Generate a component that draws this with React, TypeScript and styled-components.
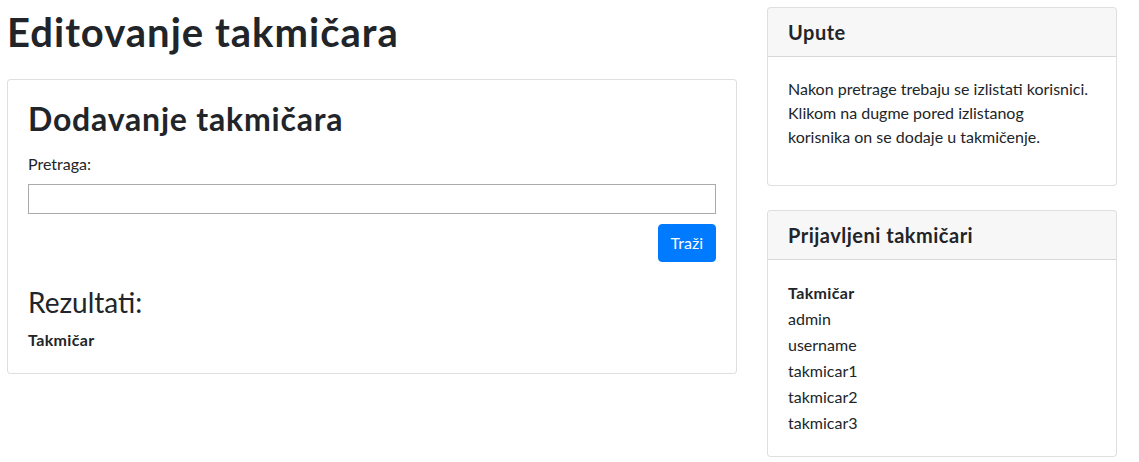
import React from 'react';
import styled, { createGlobalStyle } from 'styled-components';

const GlobalStyle = createGlobalStyle`
  body {
    margin: 0;
    background: #fff;
    color: #212529;
    font-family: Lato, 'Liberation Sans', sans-serif;
    font-size: 16px;
    line-height: 24px;
  }
`;

const contestants = ['admin', 'username', 'takmicar1', 'takmicar2', 'takmicar3'];

export default function App() {
  return (
    <>
      <GlobalStyle />
      <Page>
        <Main>
          <Title>Editovanje takmičara</Title>
          <Card>
            <CardBody>
              <SubTitle>Dodavanje takmičara</SubTitle>
              <Label htmlFor="search">Pretraga:</Label>
              <SearchInput id="search" type="text" />
              <Actions>
                <Button type="button">Traži</Button>
              </Actions>
              <Results>Rezultati:</Results>
              <Table>
                <thead>
                  <tr>
                    <Th>Takmičar</Th>
                  </tr>
                </thead>
              </Table>
            </CardBody>
          </Card>
        </Main>
        <Side>
          <Card>
            <CardHeader>
              <CardTitle>Upute</CardTitle>
            </CardHeader>
            <CardBody>
              <Text>
                Nakon pretrage trebaju se izlistati korisnici.
                <br />
                Klikom na dugme pored izlistanog
                <br />
                korisnika on se dodaje u takmičenje.
              </Text>
            </CardBody>
          </Card>
          <Card>
            <CardHeader>
              <CardTitle>Prijavljeni takmičari</CardTitle>
            </CardHeader>
            <CardBody>
              <Table>
                <thead>
                  <tr>
                    <Th>Takmičar</Th>
                  </tr>
                </thead>
                <tbody>
                  {contestants.map((name) => (
                    <tr key={name}>
                      <Td>{name}</Td>
                    </tr>
                  ))}
                </tbody>
              </Table>
            </CardBody>
          </Card>
        </Side>
      </Page>
    </>
  );
}

const Page = styled.div`
  display: grid;
  grid-template-columns: 730px 350px;
  column-gap: 30px;
  align-items: start;
  padding: 7px 0 0 7px;
`;

const Main = styled.div`
  display: flex;
  flex-direction: column;
`;

const Side = styled.div`
  display: flex;
  flex-direction: column;
  gap: 24px;
`;

const Title = styled.h1`
  margin: 1px 0 23px;
  font-size: 40px;
  line-height: 48px;
  font-weight: 700;
  letter-spacing: 1px;
`;

const Card = styled.div`
  display: flex;
  flex-direction: column;
  background: #fff;
  border: 1px solid rgba(0, 0, 0, 0.125);
  border-radius: 4px;
  overflow: hidden;
`;

const CardHeader = styled.div`
  padding: 12px 20px;
  background: rgba(0, 0, 0, 0.03);
  border-bottom: 1px solid rgba(0, 0, 0, 0.125);
`;

const CardTitle = styled.h5`
  margin: 0;
  font-size: 20px;
  line-height: 24px;
  font-weight: 700;
  letter-spacing: 0.5px;
`;

const CardBody = styled.div`
  display: flex;
  flex-direction: column;
  padding: 20px;
`;

const SubTitle = styled.h2`
  margin: 0 0 14px;
  font-size: 32px;
  line-height: 38px;
  font-weight: 700;
  letter-spacing: 0.8px;
`;

const Label = styled.label`
  display: block;
  margin-bottom: 8px;
`;

const SearchInput = styled.input`
  box-sizing: border-box;
  width: 100%;
  height: 30px;
  margin: 0;
  padding: 2px 6px;
  border: 1px solid #a9a9a9;
  border-radius: 0;
  font: inherit;
  outline: none;
`;

const Actions = styled.div`
  display: flex;
  justify-content: flex-end;
  margin-top: 10px;
`;

const Button = styled.button`
  padding: 6px 12px;
  border: 1px solid #007bff;
  border-radius: 4px;
  background: #007bff;
  color: #fff;
  font: inherit;
  line-height: 24px;
  cursor: pointer;
`;

const Results = styled.h3`
  margin: 24px 0 7px;
  font-size: 28px;
  line-height: 33.6px;
  font-weight: 400;
`;

const Table = styled.table`
  border-collapse: collapse;
  border-spacing: 0;
`;

const Th = styled.th`
  padding: 1px 0;
  text-align: left;
  font-weight: 700;
  letter-spacing: 0.35px;
`;

const Td = styled.td`
  padding: 1px 0;
`;

const Text = styled.p`
  margin: 0 0 16px;
`;
